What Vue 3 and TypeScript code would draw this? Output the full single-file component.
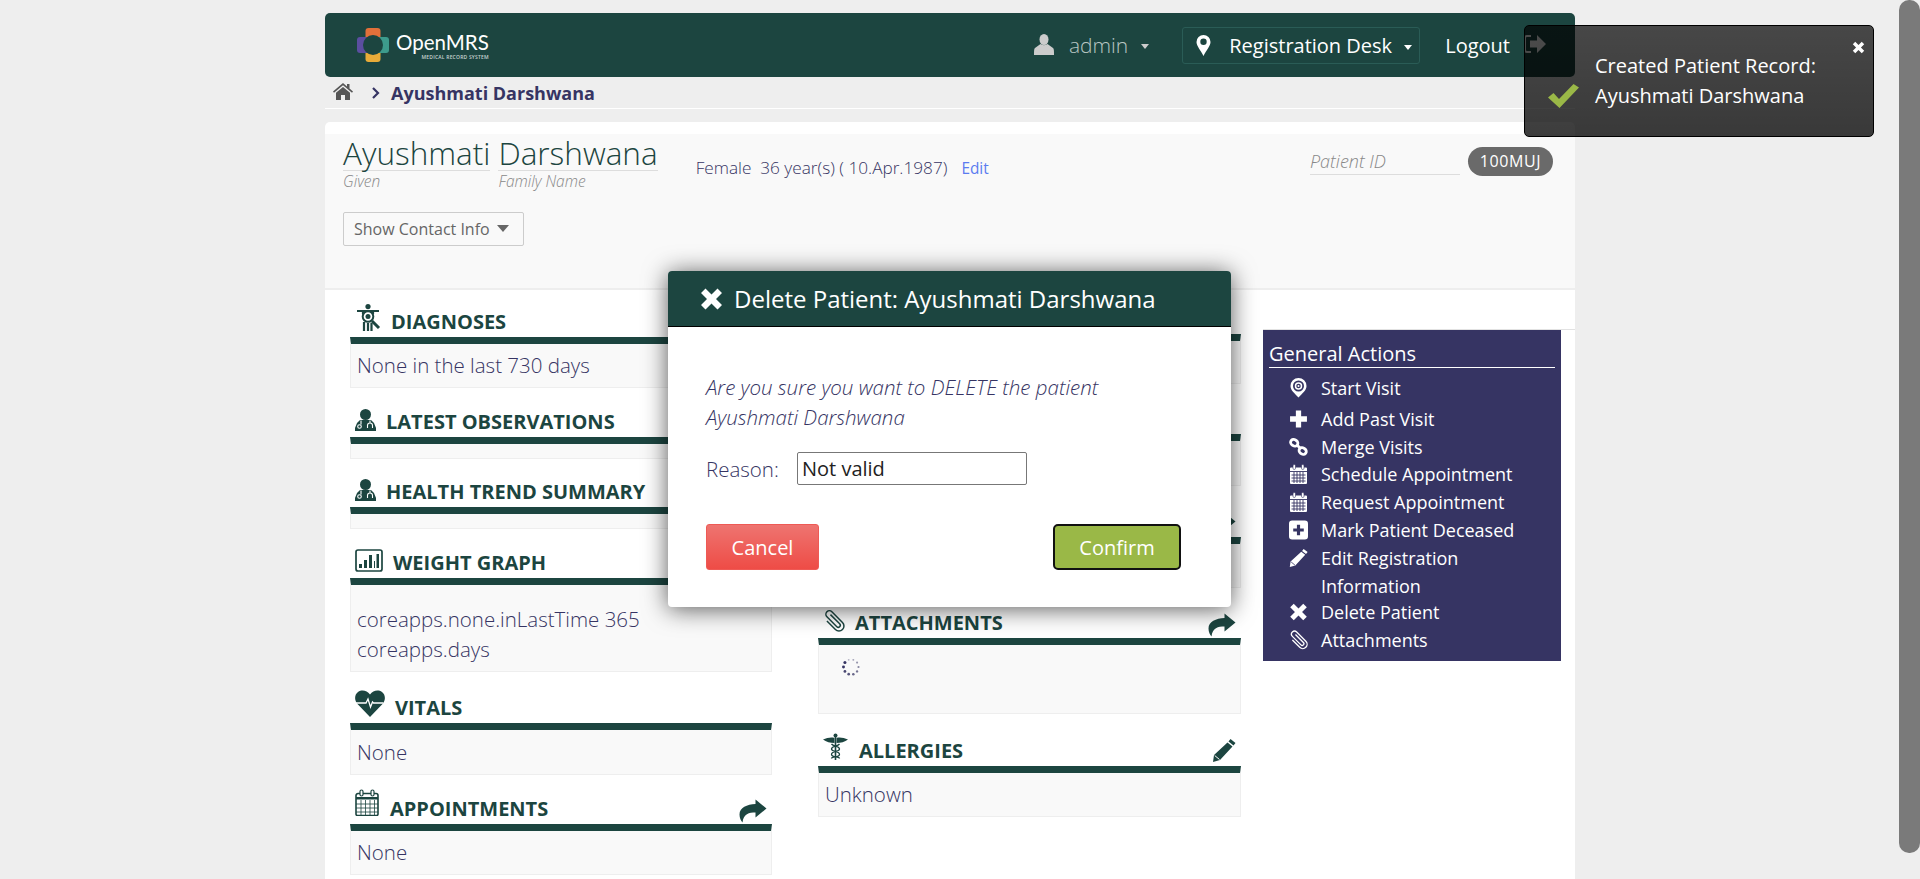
<script setup lang="ts">
interface Section {
  key: string
  title: string
  icon: string
  action?: string
  lines: string[]
  spinner?: boolean
}

const leftSections: Section[] = [
  { key: 'diag', title: 'Diagnoses', icon: 'diag', lines: ['None in the last 730 days'] },
  { key: 'obs', title: 'Latest Observations', icon: 'doc', lines: [] },
  { key: 'trend', title: 'Health Trend Summary', icon: 'doc', lines: [] },
  { key: 'weight', title: 'Weight Graph', icon: 'chart', lines: ['coreapps.none.inLastTime 365', 'coreapps.days'] },
  { key: 'vitals', title: 'Vitals', icon: 'heart', lines: ['None'] },
  { key: 'appts', title: 'Appointments', icon: 'cal', action: 'share', lines: ['None'] },
]

const midSections: Section[] = [
  { key: 'm1', title: '', icon: '', lines: [] },
  { key: 'm2', title: '', icon: '', lines: [] },
  { key: 'm3', title: '', icon: '', action: 'share', lines: [] },
  { key: 'attach', title: 'Attachments', icon: 'clip', action: 'share', lines: [], spinner: true },
  { key: 'allergy', title: 'Allergies', icon: 'cadu', action: 'pencil', lines: ['Unknown'] },
]

const actions = [
  { key: 'start', label: 'Start Visit', icon: 'target' },
  { key: 'past', label: 'Add Past Visit', icon: 'plus' },
  { key: 'merge', label: 'Merge Visits', icon: 'link' },
  { key: 'sched', label: 'Schedule Appointment', icon: 'calw' },
  { key: 'req', label: 'Request Appointment', icon: 'calw' },
  { key: 'dead', label: 'Mark Patient Deceased', icon: 'plusbox' },
  { key: 'edit', label: 'Edit Registration Information', icon: 'pencil' },
  { key: 'del', label: 'Delete Patient', icon: 'times' },
  { key: 'att', label: 'Attachments', icon: 'clip' },
]

const dots = Array.from({ length: 10 }, (_, i) => {
  const a = (i / 10) * Math.PI * 2
  return { cx: 10 + 7.5 * Math.cos(a), cy: 10 + 7.5 * Math.sin(a), o: 0.35 + ((i + 3) % 10) * 0.08, r: 0.9 + ((i + 3) % 10) * 0.07 }
})
</script>

<template>
  <div class="page">
    <svg class="defs" width="0" height="0" aria-hidden="true">
      <symbol id="i-diag" viewBox="0 0 24 27">
        <circle cx="11" cy="2.6" r="2.6" fill="currentColor" />
        <path d="M0 7h22M6 7v3M16 7v3M7 18v9M11 19v8M14.500 19v8" stroke="currentColor" stroke-width="2.2" fill="none" />
        <circle cx="11" cy="12.500" r="5.300" stroke="currentColor" stroke-width="2" fill="none" />
        <circle cx="11" cy="12.500" r="2.500" fill="currentColor" />
        <path d="M15 17l7 7" stroke="currentColor" stroke-width="3" fill="none" />
      </symbol>
      <symbol id="i-doc" viewBox="0 0 21 22">
        <circle cx="10.500" cy="5.500" r="5.500" fill="currentColor" />
        <path d="M5 11h11l3 3 2 5v3H0v-3l2-5z" fill="currentColor" />
        <circle cx="4.500" cy="17.500" r="1.800" fill="none" stroke="#fff" stroke-width="1.100" />
        <path d="M6 11.500v4M15 11.500v2.500M12.500 19v-2.500q0-2.500 2.500-2.500t2.500 2.500V19" stroke="#fff" stroke-width="1.100" fill="none" />
      </symbol>
      <symbol id="i-chart" viewBox="0 0 28 23">
        <rect x="1" y="1" width="26" height="21" rx="2" fill="none" stroke="currentColor" stroke-width="1.700" />
        <path d="M4 15h3v4H4zM9 11h3v8H9zM14 6h3v13h-3zM19 12h1v7h-1zM21.500 5h2.500v14h-2.500z" fill="currentColor" />
      </symbol>
      <symbol id="i-heart" viewBox="0 0 30 27">
        <path d="M15 27 2.500 14C-1 10-.5 4.500 3 2c4-2.800 9-1.500 12 2.500C18 .500 23-.800 27 2c3.500 2.500 4 8 .5 12z" fill="currentColor" />
        <path d="M1 13h10l2-4 2.500 8 2-5 1 1h10" fill="none" stroke="#fff" stroke-width="1.300" />
      </symbol>
      <symbol id="i-cal" viewBox="0 0 24 27">
        <path d="M1 6.500a2 2 0 0 1 2-2h18a2 2 0 0 1 2 2V25a1.500 1.500 0 0 1-1.500 1.500h-19A1.500 1.500 0 0 1 1 25z" fill="none" stroke="currentColor" stroke-width="1.600" />
        <path d="M1 10.500h22V8H1z" fill="currentColor" />
        <path d="M1 15h22M1 19h22M1 23h22M6 11v15M10.500 11v15M15 11v15M19.500 11v15" stroke="currentColor" stroke-width=".8" fill="none" />
        <rect x="5" y="1" width="3" height="6" rx="1.500" fill="#fff" stroke="currentColor" stroke-width="1.200" />
        <rect x="16" y="1" width="3" height="6" rx="1.500" fill="#fff" stroke="currentColor" stroke-width="1.200" />
      </symbol>
      <symbol id="i-share" viewBox="0 0 28 24">
        <path d="M16.500.5 27.500 9.500 16.500 18.500V13.500C10 13.500 4.500 14.500 3.500 23.500 2 22 .5 19 .5 15.500.5 8.500 8 5.500 16.500 5z" fill="currentColor" />
      </symbol>
      <symbol id="i-pencil" viewBox="0 0 24 23">
        <path d="M18.500 0 23.500 4 21.500 6.500 16.500 2.500zM15.500 3.500 20.500 7.500 8 21 1 23 2 16z" fill="currentColor" />
        <path d="M2.700 16.500 7.500 20.500" stroke="var(--sep, #fff)" stroke-width="1" fill="none" />
      </symbol>
      <symbol id="i-clip" viewBox="0 0 22 22">
        <g transform="translate(11 11) rotate(-45) translate(-5 -13)">
          <path d="M7 6v13a2 2 0 0 1-4 0V5a3.500 3.500 0 0 1 7 0v15a5 5 0 0 1-10 0V8" fill="none" stroke="currentColor" stroke-width="1.500" />
        </g>
      </symbol>
      <symbol id="i-cadu" viewBox="0 0 25 27">
        <circle cx="12.500" cy="2.500" r="2" fill="currentColor" />
        <path d="M0 6.500C4 5 8 4 11.500 5v5C7.500 10 3 9 0 6.500zM25 6.500C21 5 17 4 13.500 5v5c4 0 8.500-1 11.500-3.500z" fill="currentColor" />
        <path d="M12.500 4v23" stroke="currentColor" stroke-width="1.600" />
        <path d="M16.500 11c-2 2.500-8 2-8 5s8 2 8 5.500-8 1.500-8 4M8.500 11c2 2.500 8 2 8 5s-8 2-8 5.500 8 1.500 8 4" fill="none" stroke="currentColor" stroke-width="1.300" />
      </symbol>
      <symbol id="i-target" viewBox="0 0 18 20">
        <path fill-rule="evenodd" d="M9 0a8 8 0 0 1 8 8c0 4.500-4 7-8 11.500C5 15 1 12.500 1 8a8 8 0 0 1 8-8zm0 2.500a5.500 5.500 0 1 0 0 11 5.500 5.500 0 0 0 0-11z" fill="currentColor" />
        <circle cx="9" cy="8" r="3" fill="none" stroke="currentColor" stroke-width="1.500" />
        <circle cx="9" cy="8" r="1" fill="currentColor" />
      </symbol>
      <symbol id="i-plus" viewBox="0 0 18 18">
        <path d="M6.500 1h5v5.500H17v5h-5.500V17h-5v-5.500H1v-5h5.500z" fill="currentColor" />
      </symbol>
      <symbol id="i-link" viewBox="0 0 19 18">
        <g fill="none" stroke="currentColor" stroke-width="2.800">
          <rect x="1.600" y="1.600" width="7.500" height="6" rx="3" transform="rotate(35 5 4.500)" />
          <rect x="10" y="10.200" width="7.500" height="6" rx="3" transform="rotate(35 14 13)" />
          <path d="M8 7l3.500 3.500" />
        </g>
      </symbol>
      <symbol id="i-calw" viewBox="0 0 19 20">
        <path d="M1 4.500a1 1 0 0 1 1-1h15a1 1 0 0 1 1 1V19a1 1 0 0 1-1 1H2a1 1 0 0 1-1-1z" fill="currentColor" />
        <path d="M1 7.500h17M2.500 11h14M2.500 14h14M2.500 17h14M5 8v11M8 8v11M11 8v11M14 8v11" stroke="#363463" stroke-width=".9" fill="none" />
        <rect x="4" y="0.500" width="2.500" height="5" rx="1.200" fill="currentColor" stroke="#363463" stroke-width=".6" />
        <rect x="12.500" y="0.500" width="2.500" height="5" rx="1.200" fill="currentColor" stroke="#363463" stroke-width=".6" />
      </symbol>
      <symbol id="i-plusbox" viewBox="0 0 18 18">
        <path fill-rule="evenodd" d="M3 0h12a3 3 0 0 1 3 3v12a3 3 0 0 1-3 3H3a3 3 0 0 1-3-3V3a3 3 0 0 1 3-3zm4.500 4v3.500H4v3h3.500V14h3v-3.500H14v-3h-3.500V4z" fill="currentColor" />
      </symbol>
      <symbol id="i-times" viewBox="0 0 16 16">
        <path d="M4 1 8 5l4-4 3 3-4 4 4 4-3 3-4-4-4 4-3-3 4-4-4-4z" fill="currentColor" />
      </symbol>
    </svg>

    <div class="shell">
      <header class="topbar">
        <div class="logo">
          <svg class="logo-mark" viewBox="0 0 32 34" aria-hidden="true">
            <rect x="8.500" y="0" width="15" height="14" rx="3" fill="#e2703a" />
            <rect x="8.500" y="20" width="15" height="14" rx="3" fill="#e8ab39" />
            <rect x="0" y="9" width="14" height="16" rx="3" fill="#5b4ea0" />
            <rect x="18" y="9" width="14" height="16" rx="3" fill="#3d9b8c" />
            <circle cx="16" cy="17" r="10" fill="#1c4540" />
          </svg>
          <div class="logo-text">
            <span class="logo-name">OpenMRS</span>
            <span class="logo-sub">MEDICAL RECORD SYSTEM</span>
          </div>
        </div>
        <div class="top-user">
          <svg class="ico-user" viewBox="0 0 20 21" aria-hidden="true">
            <ellipse cx="10" cy="5.500" rx="4.500" ry="5.500" fill="currentColor" />
            <path d="M6.500 10 1 14c-1 .8-1 3-1 7h20c0-4 0-6.200-1-7l-5.500-4c-2 1.500-5 1.500-7 0z" fill="currentColor" />
          </svg>
          <span>admin</span>
          <i class="caret caret-user"></i>
        </div>
        <div class="top-loc">
          <svg class="ico-pin" viewBox="0 0 15 21" aria-hidden="true">
            <path fill-rule="evenodd" d="M7.500 0a7 7 0 0 1 7 7c0 4-4 8-7 14-3-6-7-10-7-14a7 7 0 0 1 7-7zm0 3.500a3.200 3.200 0 1 0 0 6.400 3.200 3.200 0 0 0 0-6.400z" fill="#fff" />
          </svg>
          <span>Registration Desk</span>
          <i class="caret"></i>
        </div>
        <div class="top-logout">
          <span>Logout</span>
          <svg class="ico-out" viewBox="0 0 22 18" aria-hidden="true">
            <path d="M7 1H3a2 2 0 0 0-2 2v12a2 2 0 0 0 2 2h4" fill="none" stroke="#fff" stroke-width="2" />
            <path d="M6 5.500h7V0l9 9-9 9v-5.500H6z" fill="#fff" />
          </svg>
        </div>
      </header>

      <nav class="crumbs">
        <svg class="ico-home" viewBox="0 0 20 17" aria-hidden="true">
          <path d="M10 0 0 8.500l1 1.200L10 2.200l9 7.500 1-1.200-3.500-3V1h-2.500v2.500z" fill="#555" />
          <path d="M10 4 3 9.800V17h5v-5h4v5h5V9.800z" fill="#555" />
        </svg>
        <svg class="ico-chev" viewBox="0 0 8 12" aria-hidden="true">
          <path d="M1 1l5 5-5 5" fill="none" stroke="#363463" stroke-width="2.200" />
        </svg>
        <span>Ayushmati Darshwana</span>
      </nav>

      <main class="card">
        <section class="patient">
          <div class="patient-top">
            <div class="name-part">
              <div class="name">Ayushmati</div>
              <em>Given</em>
            </div>
            <div class="name-part">
              <div class="name">Darshwana</div>
              <em>Family Name</em>
            </div>
            <div class="demo">Female&nbsp; 36 year(s) ( 10.Apr.1987)<a class="edit">Edit</a></div>
            <div class="pid">
              <em>Patient ID</em>
            </div>
            <span class="badge">100MUJ</span>
          </div>
          <button class="contact" type="button">Show Contact Info <i class="tri"></i></button>
        </section>

        <div class="columns">
          <div class="col">
            <section v-for="s in leftSections" :key="s.key" class="sec" :class="'sec-' + s.key">
              <h3 class="sec-title">
                <svg class="sec-ico" :class="'ico-' + s.icon" aria-hidden="true"><use :href="'#i-' + s.icon" /></svg>
                <span>{{ s.title }}</span>
                <svg v-if="s.action" class="sec-act" :class="'act-' + s.action" aria-hidden="true"><use :href="'#i-' + s.action" /></svg>
              </h3>
              <div class="sec-box">
                <p v-for="l in s.lines" :key="l">{{ l }}</p>
              </div>
            </section>
          </div>

          <div class="col">
            <section v-for="s in midSections" :key="s.key" class="sec" :class="'sec-' + s.key">
              <h3 class="sec-title">
                <svg v-if="s.icon" class="sec-ico" :class="'ico-' + s.icon" aria-hidden="true"><use :href="'#i-' + s.icon" /></svg>
                <span v-if="s.title">{{ s.title }}</span>
                <svg v-if="s.action" class="sec-act" :class="'act-' + s.action" aria-hidden="true"><use :href="'#i-' + s.action" /></svg>
              </h3>
              <div class="sec-box">
                <svg v-if="s.spinner" class="spinner" viewBox="0 0 20 20" aria-hidden="true">
                  <circle v-for="(d, i) in dots" :key="i" :cx="d.cx" :cy="d.cy" :r="d.r" :opacity="d.o" fill="#363463" />
                </svg>
                <p v-for="l in s.lines" :key="l">{{ l }}</p>
              </div>
            </section>
          </div>

          <aside class="side">
            <div class="actions">
              <h4>General Actions</h4>
              <a v-for="a in actions" :key="a.key" class="act" :class="'a-' + a.key">
                <svg class="act-ico" aria-hidden="true"><use :href="'#i-' + a.icon" /></svg>
                <span>{{ a.label }}</span>
              </a>
            </div>
          </aside>
        </div>
      </main>
    </div>

    <div class="modal" role="dialog">
      <div class="modal-head">
        <svg class="modal-x" viewBox="0 0 16 16" aria-hidden="true"><use href="#i-times" /></svg>
        <span>Delete Patient: Ayushmati Darshwana</span>
      </div>
      <div class="modal-body">
        <p class="modal-q">Are you sure you want to DELETE the patient Ayushmati Darshwana</p>
        <div class="reason">
          <label>Reason:</label>
          <input type="text" value="Not valid" />
        </div>
        <div class="modal-btns">
          <button class="cancel" type="button">Cancel</button>
          <button class="confirm" type="button">Confirm</button>
        </div>
      </div>
    </div>

    <div class="toast">
      <svg class="toast-close" viewBox="0 0 16 16" aria-hidden="true"><use href="#i-times" /></svg>
      <svg class="toast-check" viewBox="0 0 31 24" aria-hidden="true">
        <path d="M0 13.500 5.500 9l5.500 6L25.500 0 31 3.500 11.500 24z" fill="#9ab847" />
      </svg>
      <div class="toast-text">Created Patient Record:<br />Ayushmati Darshwana</div>
    </div>

    <div class="scrollbar"></div>
  </div>
</template>

<style scoped>
.page {
  position: relative;
  width: 1920px;
  height: 879px;
  overflow: hidden;
  background: #eee;
  color: #363463;
  font-family: "Open Sans", "Liberation Sans", sans-serif;
  font-size: 18px;
}
.defs { position: absolute; }

.shell { width: 1250px; margin-left: 325px; padding-top: 13px; }

.topbar {
  display: flex;
  align-items: center;
  height: 64px;
  padding-right: 29px;
  background: #1c4540;
  border-radius: 5px;
  color: #fff;
}
.logo { display: flex; align-items: center; margin-left: 32px; margin-right: auto; }
.logo-mark { width: 32px; height: 34px; }
.logo-text { display: flex; flex-direction: column; margin-left: 7px; }
.logo-name { font-family: Lato, "Open Sans", sans-serif; font-weight: 400; font-size: 20.5px; line-height: 24px; }
.logo-sub { align-self: flex-end; font-size: 5px; line-height: 7px; font-weight: 600; color: #c8d4d2; letter-spacing: .2px; }

.top-user { display: flex; align-items: center; color: #b8c6c3; font-weight: 300; font-size: 21px; }
.ico-user { width: 20px; height: 21px; margin-right: 15px; color: #ccc; margin-top: -2px; }
.caret { display: inline-block; width: 0; height: 0; border: 4px solid transparent; border-top: 5px solid #fff; border-bottom: 0; }
.caret-user { margin-left: 13px; margin-top: 3px; border-top-color: #ccc; }

.top-loc {
  display: flex;
  align-items: center;
  width: 238px;
  height: 37px;
  margin-left: 33px;
  padding-left: 13px;
  box-sizing: border-box;
  border: 1px solid #2a5c56;
  border-radius: 3px;
  font-size: 20px;
}
.ico-pin { width: 15px; height: 21px; margin-right: 18px; }
.top-loc .caret { margin-left: 12px; margin-top: 4px; }

.top-logout { display: flex; align-items: center; margin-left: 25px; font-size: 20px; font-weight: 400; }
.ico-out { width: 22px; height: 18px; margin-left: 14px; margin-top: -3px; }

.crumbs {
  display: flex;
  align-items: center;
  height: 32px;
  box-sizing: border-box;
  padding-left: 8px;
  border-bottom: 1px solid #fff;
  font-size: 18px;
  font-weight: 700;
}
.ico-home { width: 20px; height: 17px; margin-top: -2px; }
.ico-chev { width: 8px; height: 12px; margin-left: 19px; margin-right: 11px; }

.card {
  margin-top: 13px;
  height: 800px;
  padding-top: 12px;
  background: #fff;
  border-radius: 5px 5px 0 0;
}

.patient {
  height: 154px;
  box-sizing: content-box;
  padding-left: 18px;
  background: #f9f9f9;
  border-bottom: 2px solid #eee;
}
.patient-top { display: flex; align-items: flex-start; }
.name-part { margin-right: 8px; color: #888; font-size: 15.500px; line-height: 20px; }
.name-part em { display: block; font-weight: 300; }
.name {
  height: 36px;
  line-height: 38px;
  border-bottom: 1px solid #ddd;
  color: #1c4540;
  font-size: 31.500px;
  font-weight: 300;
}
.demo { margin: 22px 0 0 30px; font-size: 17.200px; line-height: 24px; font-weight: 300; }
.edit { margin-left: 14px; font-size: 15.400px; font-weight: 400; color: #5b7cf0; }
.pid {
  width: 150px;
  height: 27px;
  margin: 13px 8px 0 auto;
  border-bottom: 1px solid #ddd;
  color: #888;
  font-size: 18px;
  font-weight: 300;
  line-height: 28px;
}
.badge {
  height: 29px;
  width: 85px;
  margin: 13px 22px 0 0;
  border-radius: 15px;
  background: #6a6a6a;
  color: #fff;
  font-size: 16px;
  line-height: 29px;
  text-align: center;
  letter-spacing: .6px;
}
.contact {
  display: block;
  width: 181px;
  height: 34px;
  margin-top: 21px;
  padding: 0 0 0 10px;
  text-align: left;
  background: #f9f9f9;
  border: 1px solid #ccc;
  border-radius: 2px;
  color: #666;
  font: 400 16px "Open Sans", sans-serif;
}
.tri {
  display: inline-block;
  width: 0;
  height: 0;
  margin-left: 3px;
  vertical-align: 3px;
  border: 6.500px solid transparent;
  border-top: 7px solid #666;
  border-bottom: 0;
}

.columns {
  display: grid;
  grid-template-columns: 468px 445px 312px;
  margin-left: 25px;
}
.col .sec { width: 422px; }
.col:nth-child(2) .sec { width: 423px; }

.sec-title {
  display: flex;
  align-items: flex-end;
  height: 42px;
  box-sizing: border-box;
  margin: 0;
  padding: 0 5px 6px 5px;
  color: #1c4540;
  font-size: 20px;
  line-height: 20px;
  font-weight: 700;
  text-transform: uppercase;
}
.sec-title span { margin-bottom: -1px; }
.sec-box {
  box-sizing: border-box;
  border: 1px solid #eee;
  border-top: 7px solid #1c4540;
  background: #f9f9f9;
  padding: 0 6px;
  font-weight: 300;
  font-size: 20.500px;
  line-height: 30px;
}
.sec-box p { margin: 0; }

.sec-ico { flex: none; margin-right: 10px; }
.sec-act { flex: none; margin-left: auto; }
.ico-diag { width: 24px; height: 27px; margin-left: 2px; margin-right: 10px; }
.ico-doc { width: 21px; height: 22px; margin-right: 10px; }
.ico-chart { width: 28px; height: 23px; margin-right: 10px; }
.ico-heart { width: 30px; height: 27px; margin-right: 10px; }
.ico-cal { width: 24px; height: 27px; margin-right: 11px; margin-bottom: 2px; }
.ico-clip { width: 22px; height: 22px; margin-right: 10px; }
.ico-cadu { width: 25px; height: 27px; margin-right: 11px; }
.act-share { width: 28px; height: 24px; margin-bottom: -5px; }
.act-pencil { width: 24px; height: 23px; margin-bottom: -2px; }

/* Left column: gap above each bar and height of each box */
.sec-diag { margin-top: 5px; }
.sec-diag .sec-box { height: 51px; padding-top: 6px; }
.sec-obs { margin-top: 7px; }
.sec-obs .sec-box, .sec-trend .sec-box { height: 22px; }
.sec-trend { margin-top: 6px; }
.sec-weight { margin-top: 7px; }
.sec-weight .sec-box { height: 94px; padding-top: 19px; }
.sec-vitals { margin-top: 9px; }
.sec-vitals .sec-box { height: 52px; padding-top: 7px; }
.sec-appts { margin-top: 7px; }
.sec-appts .sec-box { height: 51px; padding-top: 6px; }

/* Middle column */
.sec-m1 { margin-top: 2px; }
.sec-m1 .sec-box { height: 50px; }
.sec-m2 { margin-top: 8px; }
.sec-m2 .sec-box { height: 52px; }
.sec-m3 { margin-top: 9px; }
.sec-m3 .sec-box { height: 51px; }
.sec-attach { margin-top: 8px; }
.sec-attach .sec-box { height: 76px; }
.sec-allergy { margin-top: 10px; }
.sec-allergy .sec-box { height: 51px; padding-top: 6px; }
.spinner { display: block; width: 20px; height: 20px; margin: 12px 0 0 16px; }

.side { margin-top: 39px; border-top: 1px solid #e2e2e2; align-self: start; }
.actions {
  --sep: #363463;
  width: 298px;
  height: 331px;
  box-sizing: border-box;
  padding: 9px 6px 0;
  background: #363463;
  color: #fff;
}
.actions h4 {
  margin: 0;
  height: 28px;
  border-bottom: 1px solid #fff;
  font-size: 20px;
  font-weight: 400;
  line-height: 30px;
}
.act {
  display: flex;
  align-items: flex-start;
  font-size: 18px;
  line-height: 28px;
}
.act span { width: 230px; }
.act-ico { flex: none; width: 19px; height: 20px; margin: 4px 13px 0 20px; }
.a-start { padding-top: 6px; }
.a-past { margin-top: 3px; }
.a-sched { margin-top: -1px; }
.a-del { margin-top: -2px; }

.modal {
  position: absolute;
  left: 668px;
  top: 271px;
  width: 563px;
  height: 336px;
  background: #fff;
  border-radius: 4px;
  box-shadow: 0 2px 24px rgba(0, 0, 0, .65);
}
.modal-head {
  display: flex;
  align-items: center;
  height: 56px;
  box-sizing: border-box;
  padding-left: 31px;
  background: #1c4540;
  border-bottom: 1px solid #000;
  border-radius: 4px 4px 0 0;
  color: #fff;
  font-size: 24px;
}
.modal-x { width: 25px; height: 24px; margin-right: 10px; }
.modal-body { padding: 45px 38px 0; }
.modal-q { margin: 0; width: 440px; font-style: italic; font-weight: 300; font-size: 20.500px; line-height: 30px; }
.reason { display: flex; align-items: center; margin-top: 20px; font-weight: 300; font-size: 20.500px; }
.reason label { width: 91px; }
.reason input {
  width: 230px;
  height: 33px;
  box-sizing: border-box;
  padding: 0 4px;
  border: 1px solid #777;
  border-radius: 2px;
  color: #222;
  font: 400 20px "Open Sans", sans-serif;
}
.modal-btns { display: flex; justify-content: space-between; margin-top: 39px; margin-right: 12px; }
.modal-btns button { height: 46px; color: #fff; font: 400 20px "Open Sans", sans-serif; }
.cancel { width: 113px; border: 1px solid #ee5a55; border-radius: 3px; background: linear-gradient(#ee7470, #ee4c46); }
.confirm { width: 128px; border: 2px solid #111; border-radius: 5px; background: #9ab847; }

.toast {
  position: absolute;
  left: 1524px;
  top: 25px;
  width: 350px;
  height: 112px;
  box-sizing: border-box;
  border: 1px solid #000;
  border-radius: 5px;
  background: linear-gradient(rgba(0, 0, 0, .7), rgba(0, 0, 0, .76));
  color: #fff;
}
.toast-close { position: absolute; right: 8px; top: 15px; width: 13px; height: 13px; }
.toast-check { position: absolute; left: 23px; top: 58px; width: 31px; height: 24px; }
.toast-text { margin: 25px 0 0 70px; font-size: 20px; line-height: 30px; }

.scrollbar {
  position: absolute;
  left: 1899px;
  top: 0;
  width: 21px;
  height: 853px;
  border-radius: 10px;
  background: #7a7a7a;
}
</style>

<style>
body { margin: 0; overflow: hidden; }
</style>
